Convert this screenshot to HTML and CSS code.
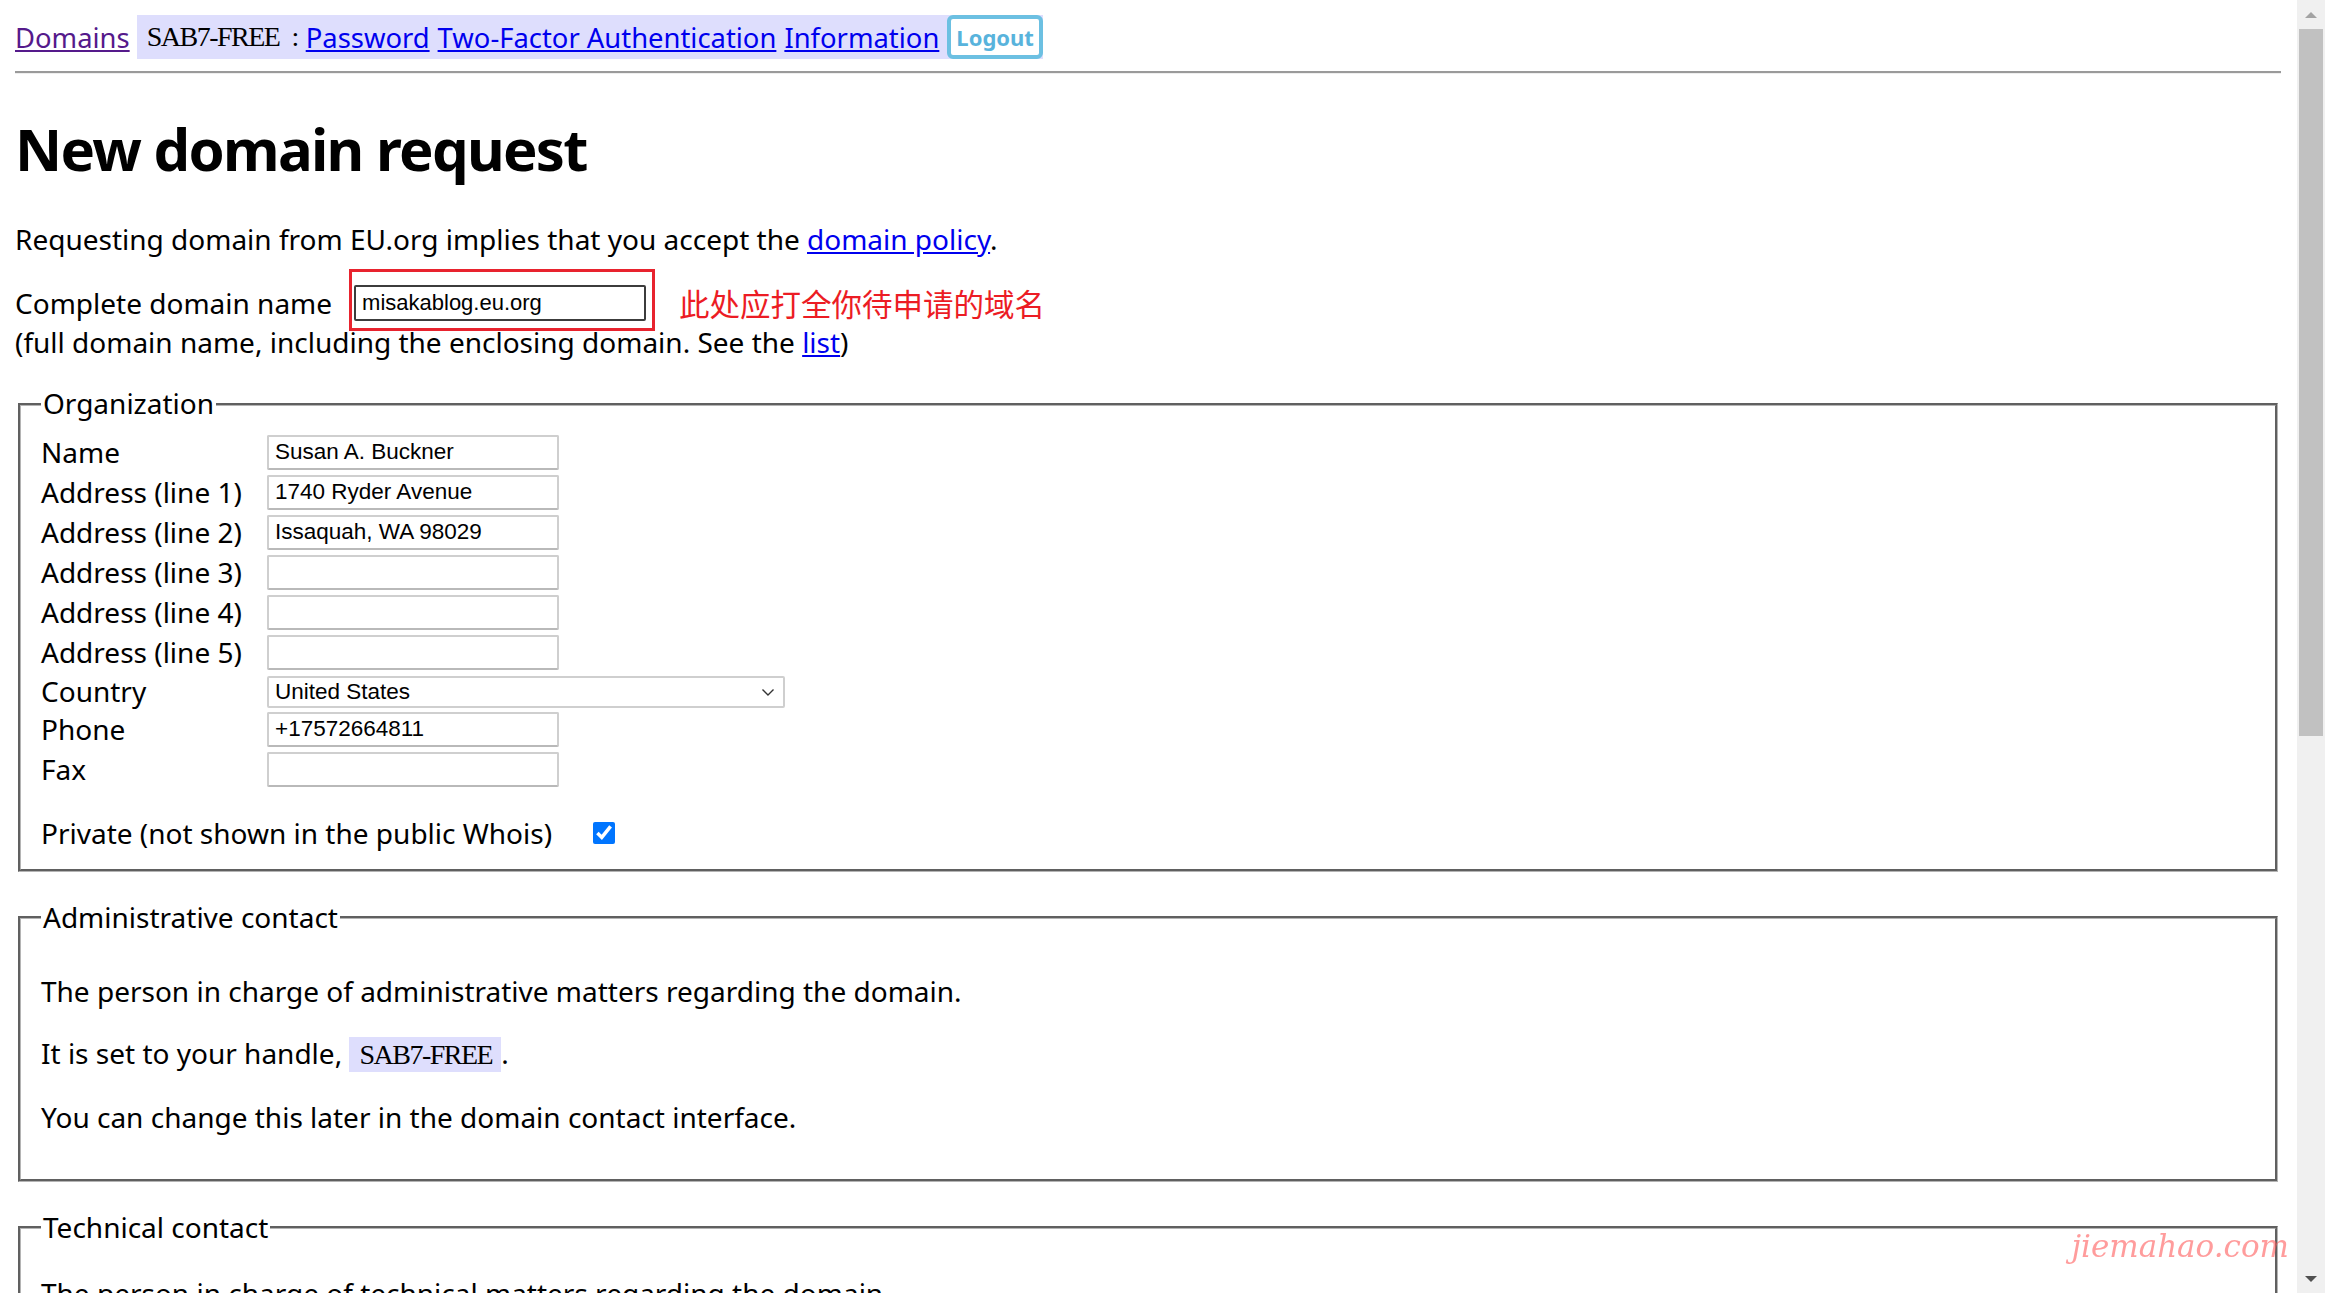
FILE: index.html
```html
<!DOCTYPE html>
<html lang="en">
<head>
<meta charset="utf-8">
<title>New domain request</title>
<link rel="stylesheet" href="styles.css">
</head>
<body>
<div class="page">
  <nav class="topnav">
    <a class="visited" href="#">Domains</a>
    <span class="userbar">
      <span class="handle">SAB7-FREE</span><span class="colon">:</span>
      <a href="#">Password</a>
      <a href="#">Two-Factor Authentication</a>
      <a href="#">Information</a>
      <button class="logout" type="button">Logout</button>
    </span>
  </nav>
  <hr class="rule">
  <h1 class="title">New domain request</h1>
  <p class="intro">Requesting domain from EU.org implies that you accept the <a href="#">domain policy</a>.</p>
  <div class="domain-row">
    <label class="domain-label" for="fqdn">Complete domain name</label>
    <span class="annot-wrap">
      <input class="domain-input" id="fqdn" type="text" value="misakablog.eu.org">
      <span class="annot-box"></span>
    </span>
    <span class="annot-text">此处应打全你待申请的域名</span>
  </div>
  <div class="note">(full domain name, including the enclosing domain. See the <a href="#">list</a>)</div>

  <fieldset class="group org">
    <legend>Organization</legend>
    <div class="form-grid">
      <span class="lbl">Name</span><input class="field" type="text" value="Susan A. Buckner">
      <span class="lbl">Address (line 1)</span><input class="field" type="text" value="1740 Ryder Avenue">
      <span class="lbl">Address (line 2)</span><input class="field" type="text" value="Issaquah, WA 98029">
      <span class="lbl">Address (line 3)</span><input class="field" type="text" value="">
      <span class="lbl">Address (line 4)</span><input class="field" type="text" value="">
      <span class="lbl">Address (line 5)</span><input class="field" type="text" value="">
      <span class="lbl">Country</span>
      <span class="select-wrap">
        <select class="country"><option>United States</option></select>
        <svg class="chev" width="16" height="10" viewBox="0 0 16 10"><path d="M2.5 2.5 L8 8 L13.5 2.5" fill="none" stroke="#333" stroke-width="1.4"/></svg>
      </span>
      <span class="lbl">Phone</span><input class="field" type="text" value="+17572664811">
      <span class="lbl">Fax</span><input class="field" type="text" value="">
    </div>
    <div class="private-row">
      <span>Private (not shown in the public Whois)</span>
      <input class="check" type="checkbox" checked>
    </div>
  </fieldset>

  <fieldset class="group admin">
    <legend>Administrative contact</legend>
    <p>The person in charge of administrative matters regarding the domain.</p>
    <p>It is set to your handle, <span class="handle-chip">SAB7-FREE</span>.</p>
    <p>You can change this later in the domain contact interface.</p>
  </fieldset>

  <fieldset class="group tech">
    <legend>Technical contact</legend>
    <p>The person in charge of technical matters regarding the domain.</p>
  </fieldset>
</div>

<div class="watermark">jiemahao.com</div>

<div class="scrollbar">
  <svg class="arrow" width="28" height="29" viewBox="0 0 28 29"><path d="M8 18 L14 12 L20 18 Z" fill="#a3a3a3"/></svg>
  <div class="thumb"></div>
  <div class="track-rest"></div>
  <svg class="arrow" width="28" height="29" viewBox="0 0 28 29"><path d="M8 12 L14 18 L20 12 Z" fill="#505050"/></svg>
</div>
</body>
</html>
```

FILE: styles.css
```css
html, body {
  margin: 0;
  height: 100%;
  overflow: hidden;
  background: #fff;
}
body {
  font-family: "Noto Sans", "Open Sans", sans-serif;
  font-size: 28px;
  color: #000;
}
.page {
  padding: 15px 44px 0 15px;
}
a { color: #0000ee; }
a.visited { color: #551a8b; }

.topnav {
  display: flex;
  align-items: center;
  height: 44px;
  gap: 7px;
  font-size: 27.4px;
}
.userbar {
  display: flex;
  align-items: center;
  height: 44px;
  background: #dedefd;
  padding-left: 10px;
  gap: 8px;
}
.handle, .colon {
  font-family: "Liberation Serif", serif;
  font-size: 28px;
  letter-spacing: -1.5px;
}
.colon { margin-left: 4px; }
.logout {
  height: 44px;
  padding: 0 5px;
  background: #fff;
  border: 4px solid #6cc0e2;
  border-radius: 6px;
  color: #58b3dc;
  font-family: "Noto Sans", sans-serif;
  font-weight: bold;
  font-size: 22px;
}

.rule {
  margin: 12px 0 0 0;
  border: 0;
  border-top: 2px solid #9a9a9a;
  border-bottom: 1px solid #eee;
}

.title {
  font-size: 58px;
  font-weight: bold;
  letter-spacing: -1.7px;
  margin: 40px 0 0 0;
  line-height: 1.2;
}
.intro {
  margin: 37px 0 0 0;
  line-height: 1.3;
}

.domain-row {
  display: flex;
  align-items: center;
  margin-top: 28px;
  height: 36px;
}
.domain-label { margin-right: 22px; }
.annot-wrap {
  position: relative;
  display: inline-block;
}
.domain-input {
  display: block;
  width: 292px;
  height: 36px;
  box-sizing: border-box;
  border: 2px solid #3c3c3c;
  border-radius: 2px;
  padding: 0 6px;
  font-family: "Liberation Sans", sans-serif;
  font-size: 22px;
  color: #000;
}
.annot-box {
  position: absolute;
  left: -5px;
  top: -16px;
  right: -9px;
  bottom: -10px;
  border: 3px solid #e8232e;
}
.annot-text {
  margin-left: 33px;
  color: #ec1c24;
  font-family: "Noto Sans CJK SC", sans-serif;
  font-size: 30.5px;
}
.note {
  line-height: 1.3;
  margin-top: 3px;
}

.group {
  margin: 29px 3px 0 3px;
  border: 3px groove #b4b4b4;
  padding: 4px 20px 20px 20px;
}
.group.org { margin-top: 27px; padding-bottom: 17px; }
.group legend {
  padding: 0 2px;
  margin-left: 0;
  line-height: 1.2;
}
.form-grid {
  display: grid;
  grid-template-columns: 226px auto;
  row-gap: 5px;
  align-items: center;
  justify-items: start;
  margin-top: 10px;
}
.lbl { line-height: 30px; }
.field {
  width: 292px;
  height: 35px;
  box-sizing: border-box;
  border: 2px solid #cfcfcf;
  border-bottom-color: #b9b9b9;
  border-radius: 2px;
  padding: 0 6px;
  font-family: "Liberation Sans", sans-serif;
  font-size: 22.5px;
  color: #000;
}
.select-wrap {
  position: relative;
  display: block;
  margin-top: 1px;
  margin-bottom: -1px;
}
.country {
  display: block;
  appearance: none;
  -webkit-appearance: none;
  width: 518px;
  height: 32px;
  box-sizing: border-box;
  border: 2px solid #cfcfcf;
  border-radius: 2px;
  background: #fff;
  padding: 0 6px;
  font-family: "Liberation Sans", sans-serif;
  font-size: 22.5px;
  color: #000;
}
.chev {
  position: absolute;
  right: 9px;
  top: 11px;
}
.private-row {
  display: flex;
  align-items: center;
  margin-top: 27px;
  gap: 41px;
}
.check {
  width: 22px;
  height: 22px;
  margin: 0;
  accent-color: #0075ff;
}

.admin p, .tech p {
  margin: 0;
  line-height: 62px;
}
.admin p:first-of-type { margin-top: 21px; }
.tech p:first-of-type { margin-top: 14px; }
.admin { padding-bottom: 31px; }
.handle-chip {
  font-family: "Liberation Serif", serif;
  font-size: 28px;
  letter-spacing: -1.5px;
  background: #dedefd;
  padding: 2px 9px 2px 10px;
}

.watermark {
  position: fixed;
  right: 36px;
  top: 1228px;
  font-family: "DejaVu Serif", serif;
  font-style: italic;
  font-size: 31px;
  color: rgba(255, 90, 90, 0.6);
}

.scrollbar {
  position: fixed;
  top: 0;
  right: 0;
  width: 28px;
  height: 100%;
  background: #f0f0f0;
  display: flex;
  flex-direction: column;
  align-items: center;
}
.arrow { flex: none; }
.thumb {
  width: 24px;
  height: 707px;
  background: #c1c1c1;
  flex: none;
}
.track-rest { flex: 1; }
```
